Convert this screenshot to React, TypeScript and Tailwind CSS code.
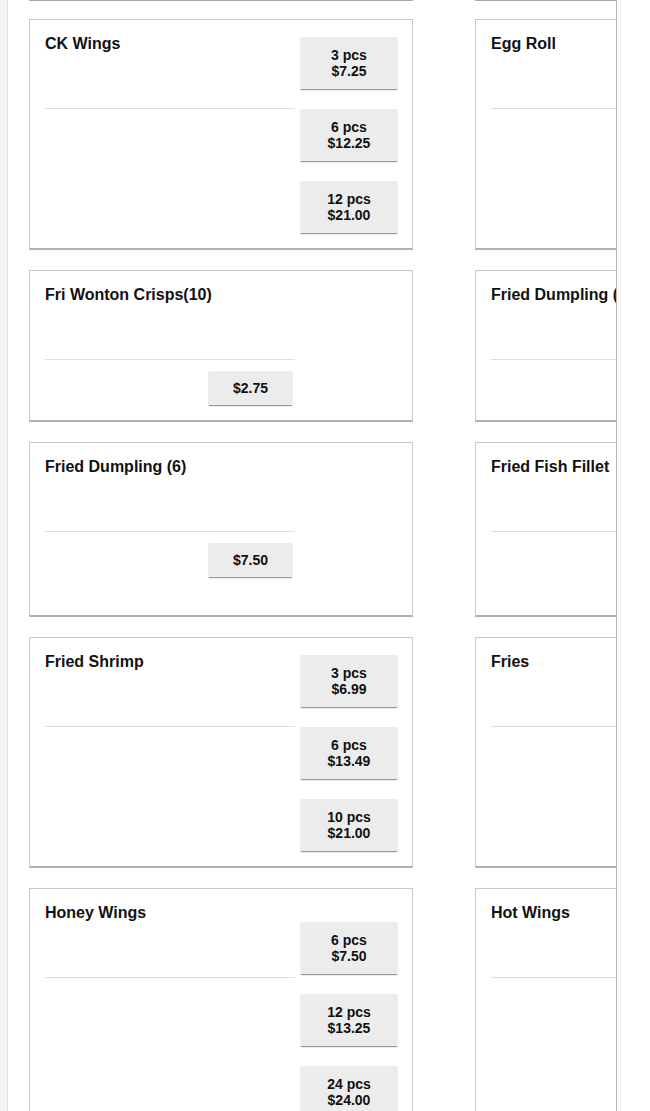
type Price = { label?: string; price: string };
type Item = { name: string; prices: Price[]; extraTop?: boolean; minH?: boolean };

const ROWS: [Item, Item][] = [
  [
    {
      name: "CK Wings",
      prices: [
        { label: "3 pcs", price: "$7.25" },
        { label: "6 pcs", price: "$12.25" },
        { label: "12 pcs", price: "$21.00" },
      ],
    },
    { name: "Egg Roll", prices: [{ price: "$1.50" }] },
  ],
  [
    { name: "Fri Wonton Crisps(10)", prices: [{ price: "$2.75" }] },
    { name: "Fried Dumpling (6)", prices: [{ price: "$7.50" }] },
  ],
  [
    { name: "Fried Dumpling (6)", prices: [{ price: "$7.50" }] },
    { name: "Fried Fish Fillet", prices: [{ price: "$7.99" }], minH: true },
  ],
  [
    {
      name: "Fried Shrimp",
      prices: [
        { label: "3 pcs", price: "$6.99" },
        { label: "6 pcs", price: "$13.49" },
        { label: "10 pcs", price: "$21.00" },
      ],
    },
    { name: "Fries", prices: [{ price: "$3.25" }] },
  ],
  [
    {
      name: "Honey Wings",
      extraTop: true,
      prices: [
        { label: "6 pcs", price: "$7.50" },
        { label: "12 pcs", price: "$13.25" },
        { label: "24 pcs", price: "$24.00" },
      ],
    },
    { name: "Hot Wings", prices: [{ price: "$7.50" }] },
  ],
];

function PriceButton({ p }: { p: Price }) {
  return (
    <button
      type="button"
      className="w-[96px] h-[52px] bg-[#ececec] shadow-[0_1px_1px_rgba(0,0,0,0.4)] flex flex-col items-center justify-center text-[14px] leading-[16px] font-bold text-[#111]"
    >
      <span>{p.label}</span>
      <span>{p.price}</span>
    </button>
  );
}

function MenuCard({ item }: { item: Item }) {
  const multi = item.prices.length > 1;
  return (
    <div
      className={`bg-white border border-b-2 border-[#c9c9c9] border-b-[#b0b0b0] p-[15px] flex gap-[6px] ${
        item.minH ? "min-h-[175px]" : ""
      }`}
    >
      <div className="w-[250px] shrink-0 flex flex-col">
        <div className="h-[73px] text-[16px] leading-[18px] font-bold text-[#111]">{item.name}</div>
        <div className="border-t border-[#dedede]" />
        {!multi && (
          <div className="flex justify-end mt-[11px] mr-[3px]">
            <button
              type="button"
              className="w-[83px] h-[34px] bg-[#ececec] shadow-[0_1px_1px_rgba(0,0,0,0.4)] text-[14px] font-bold text-[#111]"
            >
              {item.prices[0].price}
            </button>
          </div>
        )}
      </div>
      {multi && (
        <div className={`flex flex-col gap-[20px] ${item.extraTop ? "mt-[18px]" : "mt-[2px]"}`}>
          {item.prices.map((p) => (
            <PriceButton key={p.label} p={p} />
          ))}
        </div>
      )}
    </div>
  );
}

export default function App() {
  return (
    <div
      className="w-[650px] h-[1111px] overflow-hidden bg-white flex"
      style={{ fontFamily: '"Liberation Sans", Arial, sans-serif' }}
    >
      <div className="w-[8px] shrink-0 bg-[#f3f3f3] border-r border-[#e0e0e0]" />
      <div className="w-[609px] shrink-0 overflow-hidden border-r border-[#b9b9b9] pl-[21px]">
        <div className="flex gap-[62px] mb-[18px]">
          <div className="w-[384px] shrink-0 h-[1px] bg-[#a9a9a9]" />
          <div className="w-[384px] shrink-0 h-[1px] bg-[#a9a9a9]" />
        </div>
        <div className="grid grid-cols-[384px_384px] gap-x-[62px] gap-y-[20px]">
          {ROWS.map(([a, b], i) => [
            <MenuCard key={`a${i}`} item={a} />,
            <MenuCard key={`b${i}`} item={b} />,
          ])}
        </div>
      </div>
      <div className="w-[3px] shrink-0" />
      <div className="w-px shrink-0 bg-[#f0f0f0]" />
    </div>
  );
}
